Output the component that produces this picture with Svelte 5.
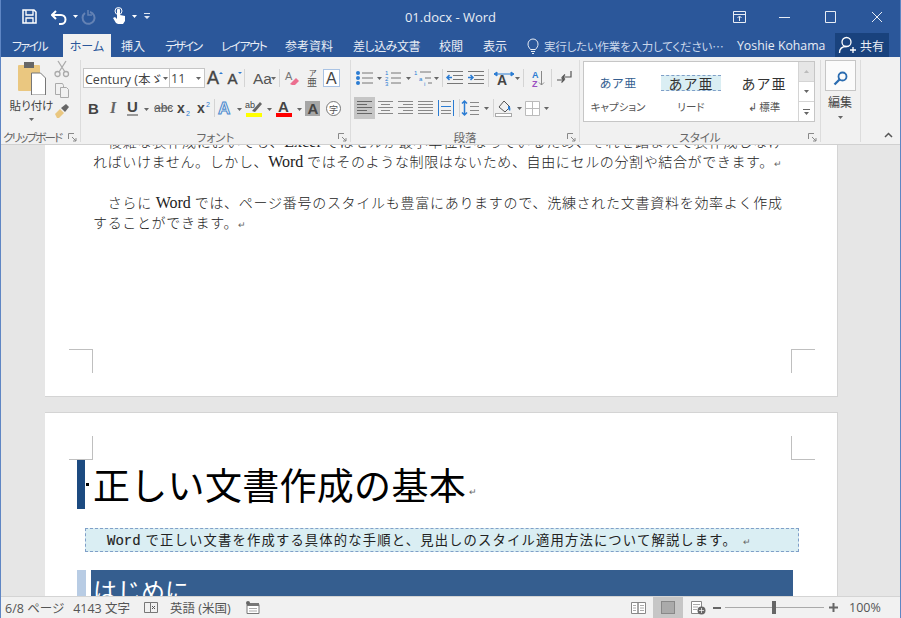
<style>
:global(body){margin:0;background:#fff}
.win{width:901px;height:618px;box-sizing:border-box;border:solid #5f86c4;border-width:0 1px;display:flex;flex-direction:column;overflow:hidden;font-family:"Noto Sans CJK JP","Noto Sans",sans-serif;color:#444;position:relative}
svg{display:block;flex:none}
.title{height:34px;background:#2b579a;display:grid;grid-template-columns:1fr auto 1fr;align-items:center;color:#e8edf5;font:13px "Open Sans","Noto Sans",sans-serif;flex:none}
.qat{display:flex;align-items:center;padding-left:20px}
.winbtns{display:flex;justify-content:flex-end;align-items:center;padding-right:18px}
.tabs{height:23px;background:#2b579a;display:flex;align-items:flex-end;color:#e8edf5;font-size:12px;flex:none;font-feature-settings:"palt"}
.tab{height:23px;line-height:23px;padding:0 10px;white-space:nowrap;flex:none;box-sizing:border-box}
.tab.file{width:62px;padding:0 0 0 11px;letter-spacing:-1.7px}
.tab.active{background:#f1f1f1;color:#2b579a;width:48px;padding:0;text-align:center}
.tab.ins{width:44px}
.tab.des{width:56px;letter-spacing:-2px}
.tab.lay{width:64px;letter-spacing:-1.4px}
.tab.ref{width:68px}
.tab.mail{width:86px;letter-spacing:-.5px}
.tab.rev{width:44px}
.tab.view{width:44px}
.tell{display:flex;align-items:center;height:23px;margin-left:10px;color:#c9d6ea;gap:5px;white-space:nowrap;width:210px;overflow:hidden;flex:none;font-size:11.5px;letter-spacing:-.2px}
.user{height:23px;font:12.3px/23px "Open Sans","Noto Sans",sans-serif;white-space:nowrap;width:98px;flex:none}
.share{height:24px;width:54px;background:#19427d;display:flex;align-items:center;gap:3px;padding-left:3px;box-sizing:border-box;flex:none}
.ribbon{height:88px;background:#f1f1f1;border-bottom:1px solid #d0d0d0;display:flex;flex:none;box-sizing:border-box;position:relative;z-index:2;font-feature-settings:"palt"}
.group{position:relative;border-right:1px solid #dcdcdc;height:82px;margin-top:3px;box-sizing:border-box;display:flex;flex-direction:column}
.g1{width:80px}.g2{width:270px}.g3{width:229px}.g4{width:241px}.g5{width:40px}.g6{flex:1;border:0}
.label{position:absolute;left:0;right:0;bottom:-2px;text-align:center;font-size:11.5px;line-height:14px;color:#666;white-space:nowrap}
.g1 .label{text-align:left;padding-left:2px;letter-spacing:-1.8px}
.launch{position:absolute;right:3px;bottom:0}
.clip{display:flex;padding-left:7px}
.paste{width:47px;display:flex;flex-direction:column;align-items:center;font-size:11.5px;color:#444;line-height:14px}
.paste svg:first-child{margin-top:1px}
.paste span{margin-top:3px;white-space:nowrap}
.paste svg:last-child{margin-top:6px}
.smalls{display:flex;flex-direction:column;margin-left:-1px;gap:4px}
.row{display:flex;align-items:center;height:22px}
.r1{margin-top:7px;padding-left:2px}
.r2{margin-top:8px;padding-left:3px}
.combo{height:20px;background:#fff;border:1px solid #c6c6c6;box-sizing:border-box;display:flex;align-items:center;font:12.5px "Open Sans","Noto Sans CJK JP",sans-serif;color:#444;overflow:hidden;white-space:nowrap;padding-left:1px}
.cfont{width:87px;justify-content:space-between;padding-right:3px}
.csize{width:36px;margin-left:-1px;justify-content:space-between;padding-right:3px}
.ltr{display:flex;align-items:center;justify-content:center;font:700 15px "Liberation Sans",sans-serif;color:#444;height:20px}
.big{font:400 18px "Liberation Sans",sans-serif;-webkit-text-stroke:.4px #444}
.mid{font:400 15px "Liberation Sans",sans-serif;-webkit-text-stroke:.4px #444}
.w19{width:19px}.w20{width:20px}
.ital{font:italic 700 16px "Liberation Serif",serif;color:#666}
.sepv{width:1px;height:18px;background:#d4d4d4;flex:none}
.p{padding-left:2px}
.act{background:#c6c6c6}
.gallery{margin:1px 0 0 3px;width:232px;height:61px;border:1px solid #c6c6c6;background:#fff;box-sizing:border-box;display:flex;position:relative}
.items{flex:1;display:grid;grid-template-columns:68px 78px 1fr;text-align:center;padding-top:13px;color:#333}
.item{display:flex;flex-direction:column;align-items:center}
.s{line-height:16px;height:16px;font-size:14px;white-space:nowrap;letter-spacing:1px;font-feature-settings:normal}
.s.blue{color:#365f91;font-size:12px;letter-spacing:.3px}
.s.lead{background:#daeef3;border:dashed #7f9fc8;border-width:1px 0;width:60px;box-sizing:border-box;line-height:14px}
.n{font-size:10.5px;color:#555;margin-top:8px;line-height:16px;white-space:nowrap}
.scroll{width:15px;border-left:1px solid #d4d4d4;display:flex;flex-direction:column;flex:none}
.scroll div{flex:1;display:flex;align-items:center;justify-content:center;border-bottom:1px solid #d4d4d4}
.scroll div:first-child{background:#e6e6e6}
.scroll div:last-child{border:0}
.edit{display:flex;flex-direction:column;align-items:center;font-size:12px;line-height:16px;margin-left:-1px}
.find{width:31px;height:31px;box-sizing:border-box;background:#fbfbfb;border:1px solid #c6c6c6;display:flex;align-items:center;justify-content:center;margin-bottom:3px}
.edit svg:last-child{margin-top:6px}
.collapse{position:absolute;right:7px;bottom:4px}
.doc{flex:1;background:#e6e6e6;overflow:hidden;padding-left:44px;min-height:0}
.page{width:793px;background:#fff;border:solid #d4d4d4;border-width:0 1px 1px 0;box-sizing:border-box;position:relative}
.p1{height:266px;margin-top:-14px;padding:0 48px;color:#222;font-size:14px;line-height:20.2px;font-weight:300}
.l{width:689px;text-align-last:justify;white-space:nowrap;font-family:"Noto Sans CJK JP",sans-serif;height:20.2px}
.l b{font:400 16px/1 "Liberation Serif",serif}
.blank{height:20.2px}
.short{text-align-last:left;letter-spacing:.65px}
.mark{font-size:9px;color:#666;font-weight:400;line-height:1}
.crop{position:absolute;width:23px;height:23px;border:0 solid #bfbfbf}
.tl{left:24px;bottom:23px;border-width:1px 1px 0 0}
.tr{right:22px;bottom:23px;border-width:1px 0 0 1px}
.bl{left:24px;top:23px;border-width:0 1px 1px 0}
.br{right:22px;top:23px;border-width:0 0 1px 1px}
.p2{margin-top:15px;height:400px;padding-top:47px;border-top:1px solid #d4d4d4}
.h1{display:flex;align-items:center;height:49px;padding-left:32px;color:#000}
.h1 i{width:8px;height:49px;background:#1c4a80;display:block;margin-right:1px}
.h1 u{width:3px;height:3px;background:#000;display:block;margin-right:4px}
.h1 span{font-size:37px;letter-spacing:.3px;line-height:49px;white-space:nowrap;font-weight:400}
.h1 em{font-style:normal;font-size:9px;color:#666;margin:14px 0 0 3px}
.leadbox{margin:19px 0 0 40px;width:714px;height:24px;box-sizing:border-box;background:#daeef3;border:1px dashed #7f9fc8;padding-left:21px;line-height:22px;font-size:13.33px;letter-spacing:1.15px;color:#222;white-space:nowrap}
.leadbox b{font:400 14px/1 "Liberation Mono",monospace;letter-spacing:0;margin-right:5px;-webkit-text-stroke:.15px #222}
.leadbox .mark{margin-left:3px}
.h2{display:flex;margin:18px 0 0 32px;height:40px}
.h2 i{width:9px;background:#b8cce4;display:block;margin-right:5px}
.h2 span{width:702px;background:#355e8f;color:#fff;font-size:24px;line-height:40px;padding-left:2px;box-sizing:border-box}
.status{height:22px;background:#f1f1f1;border-top:1px solid #d4d4d4;display:flex;align-items:center;font:12.5px "Open Sans","Noto Sans CJK JP",sans-serif;color:#555;flex:none;box-sizing:border-box;position:relative;z-index:2;white-space:nowrap}
.sl{display:flex;align-items:center;padding-left:4px;font-feature-settings:"palt"}
.st2{margin-left:9px}
.sr{margin-left:auto;display:flex;align-items:center;height:21px}
.vw{width:30px;height:21px;display:flex;align-items:center;justify-content:center}
.zoom{width:62px;padding-left:11px;font:12.5px "Open Sans",sans-serif;box-sizing:border-box}
.slider{width:99px;height:1px;background:#aaa;position:relative;margin:0 5px 0 4px}
.slider i{position:absolute;left:47px;top:-6px;width:4px;height:13px;background:#666}
</style>

{#snippet launcher()}
<svg class="launch" width="9" height="9" viewBox="0 0 9 9" fill="none" stroke="#888"><path d="M.5 6V.5H6M4 4l4 4M8 5v3H5"/></svg>
{/snippet}

<div class="win">
  <div class="title">
    <div class="qat">
      <svg width="30" height="20" viewBox="0 0 30 20" fill="none" stroke="#fff" stroke-width="1.5"><path d="M2 3h11l2 2v11H2z"/><path d="M5 3v5h7V3M5 16v-5h7v5" stroke-width="1.3"/></svg>
      <svg width="27" height="20" viewBox="0 0 27 20" fill="none" stroke="#fff" stroke-width="2"><path d="M1 8h9a4.500 4.500 0 0 1 0 9H8"/><path d="M5 4L1 8l4 4"/><path d="M22 8h5l-2.500 3z" fill="#fff" stroke="none"/></svg>
      <svg width="33" height="20" viewBox="0 0 33 20" fill="none" stroke="#6482b4" stroke-width="2"><path d="M12 5a6 6 0 1 1-5 1"/><path d="M10 3v5h4" stroke-width="1.500"/></svg>
      <svg width="32" height="20" viewBox="0 0 32 20"><path d="M5 16l-3-5 2-1 2 2V3a1.500 1.500 0 0 1 3 0v5l5 1v5l-2 3H7z" fill="#fff"/><circle cx="7.500" cy="4" r="3.500" fill="none" stroke="#fff"/><path d="M21 8h5l-2.500 3z" fill="#fff"/></svg>
      <svg width="12" height="20" viewBox="0 0 12 20" fill="#dfe6f1"><path d="M1 6h6v1H1zM1 9h6l-3 3z"/></svg>
    </div>
    <div>01.docx - Word</div>
    <div class="winbtns">
      <svg width="47" height="20" viewBox="0 0 47 20" fill="none" stroke="#e8edf5"><path d="M1.500 4.500h12v11h-12zM1.500 7.500h12M7.500 14V9.500M5.500 11l2-2 2 2"/></svg>
      <svg width="46" height="20" viewBox="0 0 46 20" stroke="#e8edf5"><path d="M0 10.500h11"/></svg>
      <svg width="47" height="20" viewBox="0 0 47 20" fill="none" stroke="#e8edf5"><path d="M.5 4.500h10v11H.5z"/></svg>
      <svg width="10" height="20" viewBox="0 0 10 20" fill="none" stroke="#e8edf5"><path d="M0 5l10 10M10 5L0 15"/></svg>
    </div>
  </div>

  <div class="tabs">
    <div class="tab file">ファイル</div>
    <div class="tab active">ホーム</div>
    <div class="tab ins">挿入</div>
    <div class="tab des">デザイン</div>
    <div class="tab lay">レイアウト</div>
    <div class="tab ref">参考資料</div>
    <div class="tab mail">差し込み文書</div>
    <div class="tab rev">校閲</div>
    <div class="tab view">表示</div>
    <div class="tell">
      <svg width="12" height="16" viewBox="0 0 12 16" fill="none" stroke="#e8edf5"><path d="M3.500 11.500C2 9.500 1 8.500 1 6a5 5 0 0 1 10 0c0 2.500-1 3.500-2.500 5.500zM4 13.500h4M5 15.500h2"/></svg>
      実行したい作業を入力してください…
    </div>
    <div class="user">Yoshie Kohama</div>
    <div class="share">
      <svg width="19" height="18" viewBox="0 0 19 18" fill="none" stroke="#fff" stroke-width="1.300"><circle cx="8.500" cy="6" r="4.500"/><path d="M1.500 17c0-4 2.500-6.500 7-6.500M12 14h6M15 11v6"/></svg>
      共有
    </div>
  </div>

  <div class="ribbon">
    <div class="group g1">
      <div class="clip">
        <div class="paste">
          <svg width="30" height="34" viewBox="0 0 30 34"><rect x="1" y="4" width="22" height="26" rx="1" fill="#eac780"/><rect x="7" y="1" width="10" height="6" fill="#666"/><path d="M14.500 12h9l5 5v17h-14z" fill="#fff" stroke="#777"/></svg>
          <span>貼り付け</span>
          <svg width="5" height="3" viewBox="0 0 5 3"><path d="M0 0h5L2.500 3z" fill="#666"/></svg>
        </div>
        <div class="smalls">
          <svg width="16" height="18" viewBox="0 0 16 18" fill="none" stroke="#aaa" stroke-width="1.300"><circle cx="3.500" cy="14" r="2.500"/><circle cx="12" cy="14" r="2.500"/><path d="M5 12L12 1M11 12L4 1"/></svg>
          <svg width="16" height="17" viewBox="0 0 16 17" fill="#f1f1f1" stroke="#aaa"><path d="M1.500 1.500h7l1 2v9h-8z"/><path d="M6.500 5.500h6l2 2v8h-8z"/></svg>
          <svg width="16" height="16" viewBox="0 0 16 16"><path d="M1 11l5-5 4 4-5 5H3z" fill="#eac780"/><path d="M7 5l5-4 3 3-4 5z" fill="#666"/></svg>
        </div>
      </div>
      <div class="label">クリップボード</div>
      {@render launcher()}
    </div>

    <div class="group g2">
      <div class="row r1">
        <div class="combo cfont"><span>Century (本ゞ</span><svg width="5" height="3" viewBox="0 0 5 3"><path d="M0 0h5L2.500 3z" fill="#666"/></svg></div>
        <div class="combo csize"><span>11</span><svg width="5" height="3" viewBox="0 0 5 3"><path d="M0 0h5L2.500 3z" fill="#666"/></svg></div>
        <div class="ltr w20 big">A<svg width="4" height="14" viewBox="0 0 4 14"><path d="M0 3l2-2 2 2z" fill="#2b7cd3"/></svg></div>
        <div class="ltr w19 mid">A<svg width="4" height="14" viewBox="0 0 4 14"><path d="M0 1l2 2 2-2z" fill="#2b7cd3"/></svg></div>
        <div class="sepv"></div>
        <svg width="34" height="20" viewBox="0 0 34 20"><text x="8" y="15.500" font-size="15.500" fill="#555" font-family="Liberation Sans">Aa</text><path d="M26 9h5l-2.500 3z" fill="#666"/></svg>
        <div class="sepv"></div>
        <svg width="22" height="20" viewBox="0 0 22 20"><text x="5" y="12" font-size="11" fill="#777" font-family="Liberation Sans">A</text><path d="M10 16l6-6 3 3-4 4h-3z" fill="#ec6f8f"/></svg>
        <svg width="19" height="20" viewBox="0 0 19 20"><text x="7" y="8" font-size="8" fill="#555">ア</text><text x="5" y="18" font-size="10" fill="#555">亜</text></svg>
        <svg width="19" height="20" viewBox="0 0 19 20"><rect x="2.500" y="1.500" width="16" height="17" fill="#fff" stroke="#a9c3e4"/><text x="5" y="16" font-size="16" fill="#444" font-family="Liberation Sans">A</text></svg>
      </div>
      <div class="row r2">
        <div class="ltr w19">B</div>
        <div class="ltr w20 ital">I</div>
        <svg width="29" height="20" viewBox="0 0 29 20"><text x="4" y="14" font-size="15" font-weight="700" fill="#444" font-family="Liberation Sans">U</text><path d="M4 17h11" stroke="#444"/><path d="M21 10h5l-2.500 3z" fill="#666"/></svg>
        <svg width="22" height="20" viewBox="0 0 22 20"><text x="2" y="14" font-size="12" fill="#555" font-family="Liberation Sans">abc</text><path d="M2 10h18" stroke="#555"/></svg>
        <svg width="20" height="20" viewBox="0 0 20 20"><text x="3" y="15" font-size="14" font-weight="700" fill="#444" font-family="Liberation Sans">x</text><text x="12" y="18" font-size="7" fill="#2b7cd3" font-family="Liberation Sans">2</text></svg>
        <svg width="20" height="20" viewBox="0 0 20 20"><text x="3" y="15" font-size="14" font-weight="700" fill="#444" font-family="Liberation Sans">x</text><text x="12" y="9" font-size="7" fill="#2b7cd3" font-family="Liberation Sans">2</text></svg>
        <div class="sepv"></div>
        <svg width="28" height="20" viewBox="0 0 28 20"><text x="3" y="16" font-size="17" font-weight="700" fill="#f1f1f1" stroke="#4a8ad0" font-family="Liberation Sans">A</text><path d="M22 10h5l-2.500 3z" fill="#666"/></svg>
        <svg width="30" height="20" viewBox="0 0 30 20"><text x="2" y="10" font-size="9" fill="#444" font-family="Liberation Sans">ab</text><path d="M9 13l8-9 2 2-7 8z" fill="#666"/><rect x="3" y="15" width="16" height="4" fill="#ff0"/><path d="M24 10h5l-2.500 3z" fill="#666"/></svg>
        <svg width="29" height="20" viewBox="0 0 29 20"><text x="5" y="14" font-size="15" font-weight="700" fill="#444" font-family="Liberation Sans">A</text><rect x="3" y="15" width="16" height="4" fill="#f00"/><path d="M24 10h5l-2.500 3z" fill="#666"/></svg>
        <svg width="21" height="20" viewBox="0 0 21 20"><rect x="3" y="3" width="15" height="15" fill="#a6a6a6"/><text x="5.500" y="16" font-size="15" font-weight="700" fill="#444" font-family="Liberation Sans">A</text></svg>
        <svg width="21" height="20" viewBox="0 0 21 20"><circle cx="10.500" cy="10.500" r="7" fill="#fff" stroke="#777"/><text x="6" y="14.500" font-size="9" fill="#555">字</text></svg>
      </div>
      <div class="label">フォント</div>
      {@render launcher()}
    </div>

    <div class="group g3">
      <div class="row r1 p">
        <svg width="30" height="20" viewBox="0 0 30 20"><g fill="#2b7cd3"><circle cx="5" cy="5" r="2"/><circle cx="5" cy="10" r="2"/><circle cx="5" cy="15" r="2"/></g><path d="M9 5h11M9 10h11M9 15h11" stroke="#777"/><path d="M24 9h5l-2.500 3z" fill="#666"/></svg>
        <svg width="29" height="20" viewBox="0 0 29 20"><g fill="#2b7cd3" font-size="6" font-family="Liberation Sans"><text x="2" y="7">1</text><text x="2" y="12.500">2</text><text x="2" y="18">3</text></g><path d="M8 5h10M8 10h10M8 15h10" stroke="#777"/><path d="M23 9h5l-2.500 3z" fill="#666"/></svg>
        <svg width="30" height="20" viewBox="0 0 30 20"><g fill="#2b7cd3" font-size="6" font-family="Liberation Sans"><text x="2" y="7">1</text><text x="7" y="13">a</text><text x="12" y="18">i</text></g><path d="M8 4h11M13 10h6M16 15h4" stroke="#777"/><path d="M22 9h5l-2.500 3z" fill="#666"/></svg>
        <div class="sepv"></div>
        <svg width="24" height="20" viewBox="0 0 24 20"><path d="M4 3.500h16M10 7.500h10M10 11.500h10M4 15.500h16" stroke="#777"/><path d="M9 9.500H4M6.500 7L4 9.500 6.500 12" stroke="#2b7cd3" stroke-width="1.500" fill="none"/></svg>
        <svg width="21" height="20" viewBox="0 0 21 20"><path d="M1 3.500h16M7 7.500h10M7 11.500h10M1 15.500h16" stroke="#777"/><path d="M1 9.500h5M3.500 7L6 9.500 3.500 12" stroke="#2b7cd3" stroke-width="1.500" fill="none"/></svg>
        <div class="sepv"></div>
        <svg width="34" height="20" viewBox="0 0 34 20"><text x="8" y="17" font-size="14" font-weight="700" fill="#444" font-family="Liberation Sans">A</text><path d="M5 6h20M5 6l3-2v4zM25 6l-3-2v4z" stroke="#2b7cd3" fill="#2b7cd3"/><path d="M26 9h5l-2.500 3z" fill="#666"/></svg>
        <div class="sepv"></div>
        <svg width="27" height="20" viewBox="0 0 27 20"><text x="8" y="10" font-size="9" font-weight="700" fill="#2b7cd3" font-family="Liberation Sans">A</text><text x="8" y="19" font-size="9" font-weight="700" fill="#9b4fc1" font-family="Liberation Sans">Z</text><path d="M17.500 3v14M15 14.500l2.500 2.500 2.500-2.500" stroke="#888" fill="none"/></svg>
        <div class="sepv"></div>
        <svg width="24" height="20" viewBox="0 0 24 20" fill="none" stroke="#555" stroke-width="1.200"><path d="M19 3v6h-8M13 6.500L10.500 9l2.500 2.500"/><path d="M5 12h7M9.500 9.500L12 12l-2.500 2.500"/></svg>
      </div>
      <div class="row r2">
        <svg class="act" width="21" height="22" viewBox="0 0 21 22"><path d="M3 4.500h15M3 7.500h10M3 10.500h15M3 13.500h10M3 16.500h15" stroke="#666"/></svg>
        <svg width="20" height="20" viewBox="0 0 20 20"><path d="M3 3.500h15M6 6.500h9M3 9.500h15M6 12.500h9M3 15.500h15" stroke="#888"/></svg>
        <svg width="20" height="20" viewBox="0 0 20 20"><path d="M3 3.500h15M8 6.500h10M3 9.500h15M8 12.500h10M3 15.500h15" stroke="#888"/></svg>
        <svg width="20" height="20" viewBox="0 0 20 20"><path d="M3 3.500h15M3 6.500h15M3 9.500h15M3 12.500h15M3 15.500h15" stroke="#888"/></svg>
        <svg width="24" height="20" viewBox="0 0 24 20"><path d="M3.500 2v16M18.500 2v16" stroke="#2b7cd3"/><path d="M6 3.500h10M6 15.500h10M6 12.500h10" stroke="#888"/><path d="M6 8.500h10" stroke="#2b7cd3"/></svg>
        <div class="sepv"></div>
        <svg width="33" height="20" viewBox="0 0 33 20"><path d="M4.500 3v14M2 5.500L4.500 3 7 5.500M2 14.500L4.500 17 7 14.500" stroke="#2b7cd3" fill="none" stroke-width="1.500"/><path d="M10 4.500h9M10 8.500h9M10 12.500h9M10 16.500h9" stroke="#888"/><path d="M24 9h5l-2.500 3z" fill="#666"/></svg>
        <div class="sepv"></div>
        <svg width="29" height="20" viewBox="0 0 29 20"><path d="M5 9l5-6 6 6-5 5z" fill="#f1f1f1" stroke="#555"/><path d="M14 8c2 0 3 2 2 5l-2-2z" fill="#2b7cd3"/><rect x="1.500" y="15.500" width="16" height="3" fill="#fff" stroke="#aaa"/><path d="M23 9h5l-2.500 3z" fill="#666"/></svg>
        <svg width="28" height="20" viewBox="0 0 28 20"><path d="M2.500 3.500h14v14h-14zM9.500 3.500v14M2.500 10.500h14" fill="#fff" stroke="#bbb"/><path d="M21 9h5l-2.500 3z" fill="#666"/></svg>
      </div>
      <div class="label">段落</div>
      {@render launcher()}
    </div>

    <div class="group g4">
      <div class="gallery">
        <div class="items">
          <div class="item"><div class="s blue">あア亜</div><div class="n">キャプション</div></div>
          <div class="item"><div class="s lead">あア亜</div><div class="n">リード</div></div>
          <div class="item"><div class="s">あア亜</div><div class="n">↲ 標準</div></div>
        </div>
        <div class="scroll">
          <div><svg width="5" height="3" viewBox="0 0 5 3"><path d="M0 3h5L2.500 0z" fill="#bbb"/></svg></div>
          <div><svg width="5" height="3" viewBox="0 0 5 3"><path d="M0 0h5L2.500 3z" fill="#666"/></svg></div>
          <div><svg width="7" height="6" viewBox="0 0 7 6"><path d="M0 0h7v1H0zM1 3h5L3.500 6z" fill="#666"/></svg></div>
        </div>
      </div>
      <div class="label">スタイル</div>
      {@render launcher()}
    </div>

    <div class="group g5">
      <div class="edit">
        <div class="find"><svg width="15" height="15" viewBox="0 0 15 15" fill="none" stroke="#2b6cb0" stroke-width="1.800"><circle cx="9.500" cy="5.500" r="4"/><path d="M6.500 8.500L1.500 13.500" stroke-width="2.300"/></svg></div>
        編集
        <svg width="5" height="3" viewBox="0 0 5 3"><path d="M0 0h5L2.500 3z" fill="#666"/></svg>
      </div>
    </div>
    <div class="group g6">
      <svg class="collapse" width="9" height="6" viewBox="0 0 9 6" fill="none" stroke="#555" stroke-width="1.500"><path d="M1 5l3.500-3.500L8 5"/></svg>
    </div>
  </div>

  <div class="doc">
    <div class="page p1">
      <div class="l">　複雑な表作成においても、<b>Excel</b> ではセルが最小単位になっているため、それを踏まえて表作成しなけ</div>
      <div class="l">ればいけません。しかし、<b>Word</b> ではそのような制限はないため、自由にセルの分割や結合ができます。<span class="mark">↵</span></div>
      <div class="blank"></div>
      <div class="l">　さらに <b>Word</b> では、ページ番号のスタイルも豊富にありますので、洗練された文書資料を効率よく作成</div>
      <div class="l short">することができます。<span class="mark">↵</span></div>
      <div class="crop tl"></div>
      <div class="crop tr"></div>
    </div>
    <div class="page p2">
      <div class="crop bl"></div>
      <div class="crop br"></div>
      <div class="h1"><i></i><u></u><span>正しい文書作成の基本</span><em>↵</em></div>
      <div class="leadbox"><b>Word</b>で正しい文書を作成する具体的な手順と、見出しのスタイル適用方法について解説します。<span class="mark">　↵</span></div>
      <div class="h2"><i></i><span>はじめに</span></div>
    </div>
  </div>

  <div class="status">
    <div class="sl">
      <span>6/8 ページ</span>
      <span class="st2">4143 文字</span>
      <svg width="40" height="16" viewBox="0 0 40 16" fill="none" stroke="#777"><path d="M14.500 2.500h6v10h-6zM20.500 2.500h7v10h-7z"/><path d="M22 6l3 3M25 6l-3 3" stroke="#555"/></svg>
      <span>英語 (米国)</span>
      <svg width="30" height="16" viewBox="0 0 30 16"><path d="M16 4.500h12v9H16z" fill="#fff" stroke="#777"/><path d="M16 3h12v3H16z" fill="#777"/><circle cx="17" cy="3" r="2" fill="#666"/><path d="M18 8.500h8M18 11h8" stroke="#aaa"/></svg>
    </div>
    <div class="sr">
      <div class="vw"><svg width="15" height="13" viewBox="0 0 15 13" fill="#fff" stroke="#888"><path d="M.5 1.500h6.500v11H.5zM7 1.500h7.500v11H7z"/><path d="M2 4.500h3M2 7h3M2 9.500h3M9 4.500h4M9 7h4M9 9.500h4" stroke="#aaa"/></svg></div>
      <div class="vw act"><svg width="14" height="13" viewBox="0 0 14 13"><rect x=".5" y=".5" width="13" height="12" fill="#aaa" stroke="#888"/></svg></div>
      <div class="vw"><svg width="15" height="14" viewBox="0 0 15 14"><path d="M.5 .5h10v12H.5z" fill="#fff" stroke="#888"/><path d="M2 3.500h7M2 6h5M2 8.500h4" stroke="#aaa"/><circle cx="10.500" cy="9.500" r="4" fill="#666"/><path d="M8 9.500h5M10.500 7v5" stroke="#fff" stroke-width=".7"/></svg></div>
      <svg width="8" height="2" viewBox="0 0 8 2"><rect width="8" height="2" fill="#666"/></svg>
      <div class="slider"><i></i></div>
      <svg width="9" height="9" viewBox="0 0 9 9"><path d="M0 3.500h9v2H0zM3.500 0h2v9h-2z" fill="#666"/></svg>
      <div class="zoom">100%</div>
    </div>
  </div>
</div>
